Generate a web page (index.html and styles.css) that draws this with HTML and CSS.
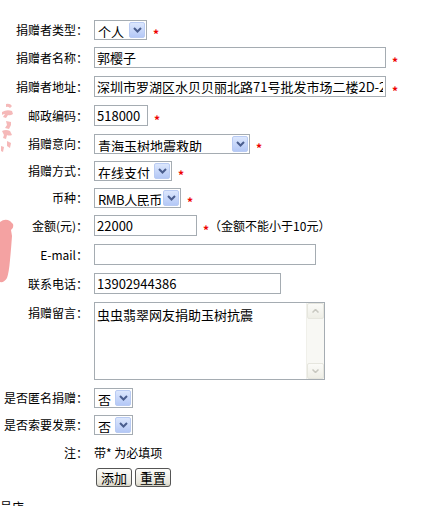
FILE: index.html
```html
<!DOCTYPE html>
<html lang="zh-CN">
  <head>
    <meta charset="UTF-8" />
    <title>捐赠登记</title>
    <link rel="stylesheet" href="styles.css">
  </head>
  <body>
    <!-- 背景印章残影 -->
    <svg class="stamp" width="16" height="190" viewBox="0 0 16 190">
      <g class="stamp-ink">
        <path d="M6 4 q4 -1 6 2 l-2 2 q-2 -2 -4 -1z" />
        <path d="M2 12 q5 -3 10 -1 l1 3 q-3 2 -5 1 l-2 3 l-3 -1 l2 -3 q-2 0 -3 1z" />
        <path d="M6 21 l5 1 l0 3 l-2 4 l-4 -1 l2 -3z" />
        <path d="M2 31 q4 -2 8 0 l2 4 q-3 1 -5 0 l-1 4 l-3 -1 l1 -3z" />
        <path d="M7 41 l4 2 l-1 5 l-3 -2z" />
        <path d="M1 46 l3 1 l-1 5 l-2 -1z" />
      </g>
      <path class="stamp-blob" d="M0 122 Q5 118 10 121 L13 124 Q14 128 11 130 L12 136 Q11 150 10 160 Q9 172 7 178 Q4 183 0 182 Z" />
    </svg>

    <form class="donate" onsubmit="return false;">
      <div class="row s">
        <label class="lbl">捐赠者类型：</label>
        <div class="field">
          <span class="combo w53">
            <select><option>个人</option><option>单位</option></select>
            <span class="drop"><svg width="9" height="6" viewBox="0 0 9 6"><path d="M1 1 L4.5 4.5 L8 1" /></svg></span>
          </span>
          <em class="req">*</em>
        </div>
      </div>

      <div class="row">
        <label class="lbl">捐赠者名称：</label>
        <div class="field">
          <input class="txt w292" type="text" value="郭樱子" />
          <em class="req">*</em>
        </div>
      </div>

      <div class="row">
        <label class="lbl">捐赠者地址：</label>
        <div class="field">
          <input class="txt w292" type="text" value="深圳市罗湖区水贝贝丽北路71号批发市场二楼2D-2" />
          <em class="req">*</em>
        </div>
      </div>

      <div class="row">
        <label class="lbl">邮政编码：</label>
        <div class="field">
          <input class="txt w54" type="text" value="518000" />
          <em class="req">*</em>
        </div>
      </div>

      <div class="row s">
        <label class="lbl">捐赠意向：</label>
        <div class="field">
          <span class="combo w156">
            <select><option>青海玉树地震救助</option></select>
            <span class="drop"><svg width="9" height="6" viewBox="0 0 9 6"><path d="M1 1 L4.5 4.5 L8 1" /></svg></span>
          </span>
          <em class="req">*</em>
        </div>
      </div>

      <div class="row s">
        <label class="lbl">捐赠方式：</label>
        <div class="field">
          <span class="combo w78">
            <select><option>在线支付</option><option>银行汇款</option></select>
            <span class="drop"><svg width="9" height="6" viewBox="0 0 9 6"><path d="M1 1 L4.5 4.5 L8 1" /></svg></span>
          </span>
          <em class="req">*</em>
        </div>
      </div>

      <div class="row s">
        <label class="lbl">币种：</label>
        <div class="field">
          <span class="combo w87">
            <select class="tight"><option>RMB人民币</option></select>
            <span class="drop"><svg width="9" height="6" viewBox="0 0 9 6"><path d="M1 1 L4.5 4.5 L8 1" /></svg></span>
          </span>
          <em class="req">*</em>
        </div>
      </div>

      <div class="row">
        <label class="lbl">金额(元)：</label>
        <div class="field">
          <input class="txt w103" type="text" value="22000" />
          <em class="req">*</em><span class="hint">（金额不能小于10元）</span>
        </div>
      </div>

      <div class="row">
        <label class="lbl">E-mail：</label>
        <div class="field">
          <input class="txt w222" type="text" value="" />
        </div>
      </div>

      <div class="row">
        <label class="lbl">联系电话：</label>
        <div class="field">
          <input class="txt w187" type="text" value="13902944386" />
        </div>
      </div>

      <div class="row memo-row">
        <label class="lbl">捐赠留言：</label>
        <div class="field">
          <div class="memo">
            <textarea>虫虫翡翠网友捐助玉树抗震</textarea>
            <div class="vscroll">
              <span class="sbtn"><svg width="7" height="4" viewBox="0 0 7 4"><path d="M0.5 3.5 L3.5 0.5 L6.5 3.5" /></svg></span>
              <span class="track"></span>
              <span class="sbtn"><svg width="7" height="4" viewBox="0 0 7 4"><path d="M0.5 0.5 L3.5 3.5 L6.5 0.5" /></svg></span>
            </div>
          </div>
        </div>
      </div>

      <div class="row s">
        <label class="lbl">是否匿名捐赠：</label>
        <div class="field">
          <span class="combo w39">
            <select><option>否</option><option>是</option></select>
            <span class="drop"><svg width="9" height="6" viewBox="0 0 9 6"><path d="M1 1 L4.5 4.5 L8 1" /></svg></span>
          </span>
        </div>
      </div>

      <div class="row s">
        <label class="lbl">是否索要发票：</label>
        <div class="field">
          <span class="combo w39">
            <select><option>否</option><option>是</option></select>
            <span class="drop"><svg width="9" height="6" viewBox="0 0 9 6"><path d="M1 1 L4.5 4.5 L8 1" /></svg></span>
          </span>
        </div>
      </div>

      <div class="row note">
        <span class="lbl">注：</span>
        <div class="field">带* 为必填项</div>
      </div>

      <div class="row actions">
        <span class="lbl"></span>
        <div class="field">
          <button type="submit" class="btn">添加</button>
          <button type="reset" class="btn">重置</button>
        </div>
      </div>
    </form>

    <div class="foot">号店</div>
  </body>
</html>
```

FILE: styles.css
```css
body {
  margin: 0;
  background-color: #fff;
  color: #000;
  font-family: "Noto Sans CJK SC", "Noto Sans", sans-serif;
  font-size: 12px;
  overflow: hidden;
}
.stamp {
  position: absolute;
  left: 0;
  top: 100px;
}
.stamp-ink {
  fill: #f2a2a2;
  opacity: 0.75;
}
.stamp-blob {
  fill: #f4a2a2;
}
.donate {
  padding-top: 16px;
}
.row {
  display: flex;
  align-items: center;
  height: 29px;
}
.row.s {
  height: 27px;
}
.row.memo-row {
  height: 86px;
  align-items: flex-start;
}
.memo-row .lbl {
  padding-top: 6px;
  line-height: 17px;
}
.memo-row .field {
  padding-top: 4px;
}
.row.note {
  height: 28px;
}
.row.actions {
  height: 21px;
  align-items: flex-start;
  padding-top: 2px;
}
.lbl {
  flex: none;
  width: 88px;
  text-align: right;
  white-space: nowrap;
}
.field {
  display: flex;
  align-items: center;
  padding-left: 6px;
  white-space: nowrap;
}
.txt {
  box-sizing: border-box;
  height: 21px;
  padding: 0 2px;
  border: 1px solid #a5acb2;
  background: #fff;
  font-family: inherit;
  font-size: 13px;
  color: #000;
  outline: none;
}
.w292 { width: 292px; }
.w54 { width: 54px; }
.w103 { width: 103px; }
.w222 { width: 222px; }
.w187 { width: 187px; }

.combo {
  box-sizing: border-box;
  display: inline-flex;
  align-items: center;
  height: 20px;
  padding: 1px;
  border: 1px solid #a5acb2;
  background: #fff;
}
.combo select {
  flex: 1;
  min-width: 0;
  height: 100%;
  padding: 0 0 0 2px;
  border: none;
  background: transparent;
  font-family: inherit;
  font-size: 13px;
  color: #000;
  appearance: none;
  -webkit-appearance: none;
  outline: none;
}
.combo select.tight {
  letter-spacing: -0.4px;
}
.combo .drop {
  box-sizing: border-box;
  flex: none;
  display: flex;
  align-items: center;
  justify-content: center;
  width: 16px;
  height: 16px;
  border: 1px solid #b9cbf3;
  border-radius: 2px;
  background: linear-gradient(#dce7fd, #b4c8f6);
}
.combo .drop path {
  fill: none;
  stroke: #4a5e8e;
  stroke-width: 2;
}
.w53 { width: 53px; }
.w156 { width: 156px; }
.w78 { width: 78px; }
.w87 { width: 87px; }
.w39 { width: 39px; }

.req {
  margin-left: 6px;
  margin-top: 8px;
  color: #e00;
  font-style: normal;
  font-weight: bold;
  font-size: 12px;
}
.hint {
  font-size: 12px;
}

.memo {
  box-sizing: border-box;
  display: flex;
  width: 231px;
  height: 78px;
  border: 1px solid #a5acb2;
  background: #fff;
}
.memo textarea {
  flex: 1;
  min-width: 0;
  padding: 2px 2px;
  border: none;
  resize: none;
  overflow: hidden;
  font-family: inherit;
  font-size: 13px;
  color: #000;
  outline: none;
}
.vscroll {
  flex: none;
  display: flex;
  flex-direction: column;
  width: 17px;
  background: #f8f8f4;
  border-left: 1px solid #f0f0ea;
}
.vscroll .sbtn {
  box-sizing: border-box;
  display: flex;
  align-items: center;
  justify-content: center;
  height: 16px;
  border: 1px solid #e6e6de;
  border-radius: 2px;
  background: linear-gradient(#fbfbf8, #eeeee6);
}
.vscroll .sbtn path {
  fill: none;
  stroke: #c8c8c0;
  stroke-width: 1.5;
}
.vscroll .track {
  flex: 1;
}

.actions .field {
  gap: 3px;
  padding-left: 8px;
}
.btn {
  box-sizing: border-box;
  height: 19px;
  padding: 0 4px;
  border: 1px solid #555;
  border-radius: 3px;
  background: linear-gradient(#fdfdfb, #e8e6dc 80%, #d6d2c4);
  font-family: inherit;
  font-size: 13px;
  line-height: 17px;
  color: #000;
  cursor: pointer;
}
.foot {
  margin-top: 9px;
  line-height: 17px;
}
```
